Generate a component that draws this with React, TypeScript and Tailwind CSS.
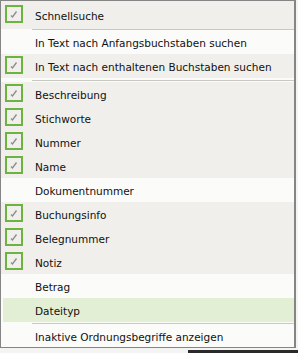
import React from "react";

type Item =
  | { kind: "item"; label: string; checked: boolean; h: number; hl?: boolean }
  | { kind: "sep"; h: number; line: number };

const items: Item[] = [
  { kind: "item", label: "Schnellsuche", checked: true, h: 28 },
  { kind: "sep", h: 1, line: 0 },
  { kind: "item", label: "In Text nach Anfangsbuchstaben suchen", checked: false, h: 24 },
  { kind: "item", label: "In Text nach enthaltenen Buchstaben suchen", checked: true, h: 24 },
  { kind: "sep", h: 4, line: 2 },
  { kind: "item", label: "Beschreibung", checked: true, h: 24 },
  { kind: "item", label: "Stichworte", checked: true, h: 24 },
  { kind: "item", label: "Nummer", checked: true, h: 24 },
  { kind: "item", label: "Name", checked: true, h: 24 },
  { kind: "item", label: "Dokumentnummer", checked: false, h: 24 },
  { kind: "item", label: "Buchungsinfo", checked: true, h: 24 },
  { kind: "item", label: "Belegnummer", checked: true, h: 24 },
  { kind: "item", label: "Notiz", checked: true, h: 24 },
  { kind: "item", label: "Betrag", checked: false, h: 24 },
  { kind: "item", label: "Dateityp", checked: false, h: 24, hl: true },
  { kind: "sep", h: 3, line: 1 },
  { kind: "item", label: "Inaktive Ordnungsbegriffe anzeigen", checked: false, h: 22 },
];

function CheckBox() {
  return (
    <div className="w-[18px] h-[18px] border-2 border-[#6db33f] flex items-center justify-center shrink-0">
      <svg width="14" height="14" viewBox="0 0 14 14">
        <path d="M4 8.5 L5.5 10 L9.5 4.5" stroke="#8c8c8c" strokeWidth="1.3" fill="none" />
      </svg>
    </div>
  );
}

export default function App() {
  return (
    <div
      className="w-[298px] h-[353px] bg-[#f4f4f2] relative overflow-hidden"
      style={{ fontFamily: "'DejaVu Sans', Tahoma, sans-serif" }}
    >
      <div className="w-[296px] h-[348px] border-t border-l border-b border-r-2 border-[#858585] bg-[#fbfbf9] flex flex-col">
        {items.map((it, i) => {
          if (it.kind === "sep") {
            return (
              <div key={i} className="bg-[#fbfbf9] flex flex-col" style={{ height: it.h }}>
                <div style={{ height: it.line }} />
                <div className="h-px bg-[#c8c8c2] ml-[31px]" />
              </div>
            );
          }
          const bg = it.hl ? "bg-[#e2efd4] ml-[2px]" : it.checked ? "bg-[#f0efeb]" : "bg-[#fbfbf9]";
          return (
            <div key={i} className={`flex items-center ${bg}`} style={{ height: it.h }}>
              <div className={`${it.hl ? "w-[2px]" : "w-[4px]"} shrink-0`} />
              <div className="w-[18px] h-[18px] shrink-0 mb-[2px]">{it.checked && <CheckBox />}</div>
              <div className="w-[12px] shrink-0" />
              <span className="text-[10.5px] text-[#111] leading-none pt-[2px] whitespace-nowrap">{it.label}</span>
            </div>
          );
        })}
      </div>
      <div className="absolute left-[188px] top-[350px] w-[110px] h-[3px] bg-[#2a2a2a]" />
    </div>
  );
}
